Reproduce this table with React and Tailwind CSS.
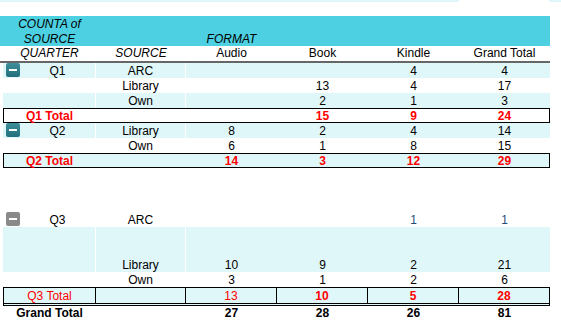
import React from 'react';

const cols = 'grid grid-cols-[93px_90px_91px_91px_91px_91px]';
const font = { fontFamily: '"Liberation Sans", Arial, sans-serif' };

const MinusBox = ({ gray }) => (
    <span
        className={`mb-[1px] ml-[3px] flex h-[14px] w-[14px] shrink-0 items-center justify-center rounded-[2px] ${
            gray ? 'bg-[#8a8a8a]' : 'bg-[linear-gradient(180deg,#3d8f9b_0%,#23707c_100%)]'
        }`}
    >
        <span className="h-[2px] w-[8px] bg-white" />
    </span>
);

const Row = ({ band, q, icon, grayIcon, source, vals, tall, blue }) => (
    <div className={`ml-[3px] w-[547px] ${cols} ${tall || 'h-[15px]'} ${band ? 'bg-[#e0f7fa]' : 'bg-white'}`}>
        <div className="flex items-end border-r border-white">
            {icon && <MinusBox gray={grayIcon} />}
            <span className="flex-1 text-center leading-[13px]">{q}</span>
        </div>
        <div className="flex items-end justify-center border-r border-white leading-[13px]">{source}</div>
        {vals.map((v, i) => (
            <div
                key={i}
                className={`flex items-end justify-center leading-[13px] ${blue && v ? 'text-[#1f4e79]' : ''}`}
            >
                {v}
            </div>
        ))}
    </div>
);

const TotalRow = ({ band, label, vals }) => (
    <div
        className={`ml-[3px] w-[547px] ${cols} h-[15px] font-bold text-[#ff0000] shadow-[inset_0_0_0_1px_#000] ${
            band ? 'bg-[#e0f7fa]' : 'bg-white'
        }`}
    >
        <div className="pt-[2px] text-center leading-[13px]">{label}</div>
        <div />
        {vals.map((v, i) => (
            <div key={i} className="pt-[2px] text-center leading-[13px]">
                {v}
            </div>
        ))}
    </div>
);

const App = () => {
    return (
        <div className="h-[329px] w-[561px] overflow-hidden bg-white text-[12px] text-black" style={font}>
            <div className="flex h-[2px]">
                <div className="w-[459px] bg-[#e0f7fa]" />
                <div className="w-[90px] bg-white" />
                <div className="flex-1 bg-[#e0f7fa]" />
            </div>

            <div className="mt-[14px] w-[550px] bg-[#4dd0e1] pl-[3px]">
                <div className={`${cols} h-[30px] italic`}>
                    <div className="pt-[1px] text-center leading-[15px]">
                        COUNTA of
                        <br />
                        SOURCE
                    </div>
                    <div />
                    <div className="flex items-end justify-center leading-[15px]">FORMAT</div>
                </div>
            </div>
            <div className={`ml-[3px] w-[547px] ${cols} h-[15px] leading-[15px]`}>
                <div className="text-center italic">QUARTER</div>
                <div className="text-center italic">SOURCE</div>
                <div className="text-center">Audio</div>
                <div className="text-center">Book</div>
                <div className="text-center">Kindle</div>
                <div className="text-center">Grand Total</div>
            </div>
            <div className="h-[2px] w-[550px] bg-[#666666]" />

            <Row band q="Q1" icon source="ARC" vals={['', '', '4', '4']} />
            <Row q="" source="Library" vals={['', '13', '4', '17']} />
            <Row band q="" source="Own" vals={['', '2', '1', '3']} />
            <TotalRow label="Q1 Total" vals={['', '15', '9', '24']} />

            <Row band q="Q2" icon source="Library" vals={['8', '2', '4', '14']} />
            <Row q="" source="Own" vals={['6', '1', '8', '15']} />
            <TotalRow band label="Q2 Total" vals={['14', '3', '12', '29']} />

            <Row tall="h-[59px]" q="Q3" icon grayIcon source="ARC" vals={['', '', '1', '1']} blue />
            <Row band tall="h-[45px]" q="" source="Library" vals={['10', '9', '2', '21']} />
            <Row q="" source="Own" vals={['3', '1', '2', '6']} />

            <div className="ml-[3px] w-[547px] border border-b-[3px] border-double border-black bg-[#e0f7fa] text-[#ff0000]">
                <div className="grid h-[15px] grid-cols-[92px_90px_91px_91px_91px_90px]">
                    <div className="border-r border-black pt-[1px] text-center leading-[14px]">Q3 Total</div>
                    <div className="border-r border-black" />
                    <div className="border-r border-black pt-[1px] text-center leading-[14px]">13</div>
                    <div className="border-r border-black pt-[1px] text-center font-bold leading-[14px]">10</div>
                    <div className="border-r border-black pt-[1px] text-center font-bold leading-[14px]">5</div>
                    <div className="pt-[1px] text-center font-bold leading-[14px]">28</div>
                </div>
            </div>

            <div className={`ml-[3px] w-[547px] ${cols} h-[15px] font-bold leading-[15px]`}>
                <div className="text-center">Grand Total</div>
                <div />
                <div className="text-center">27</div>
                <div className="text-center">28</div>
                <div className="text-center">26</div>
                <div className="text-center">81</div>
            </div>
        </div>
    );
};

export default App;
